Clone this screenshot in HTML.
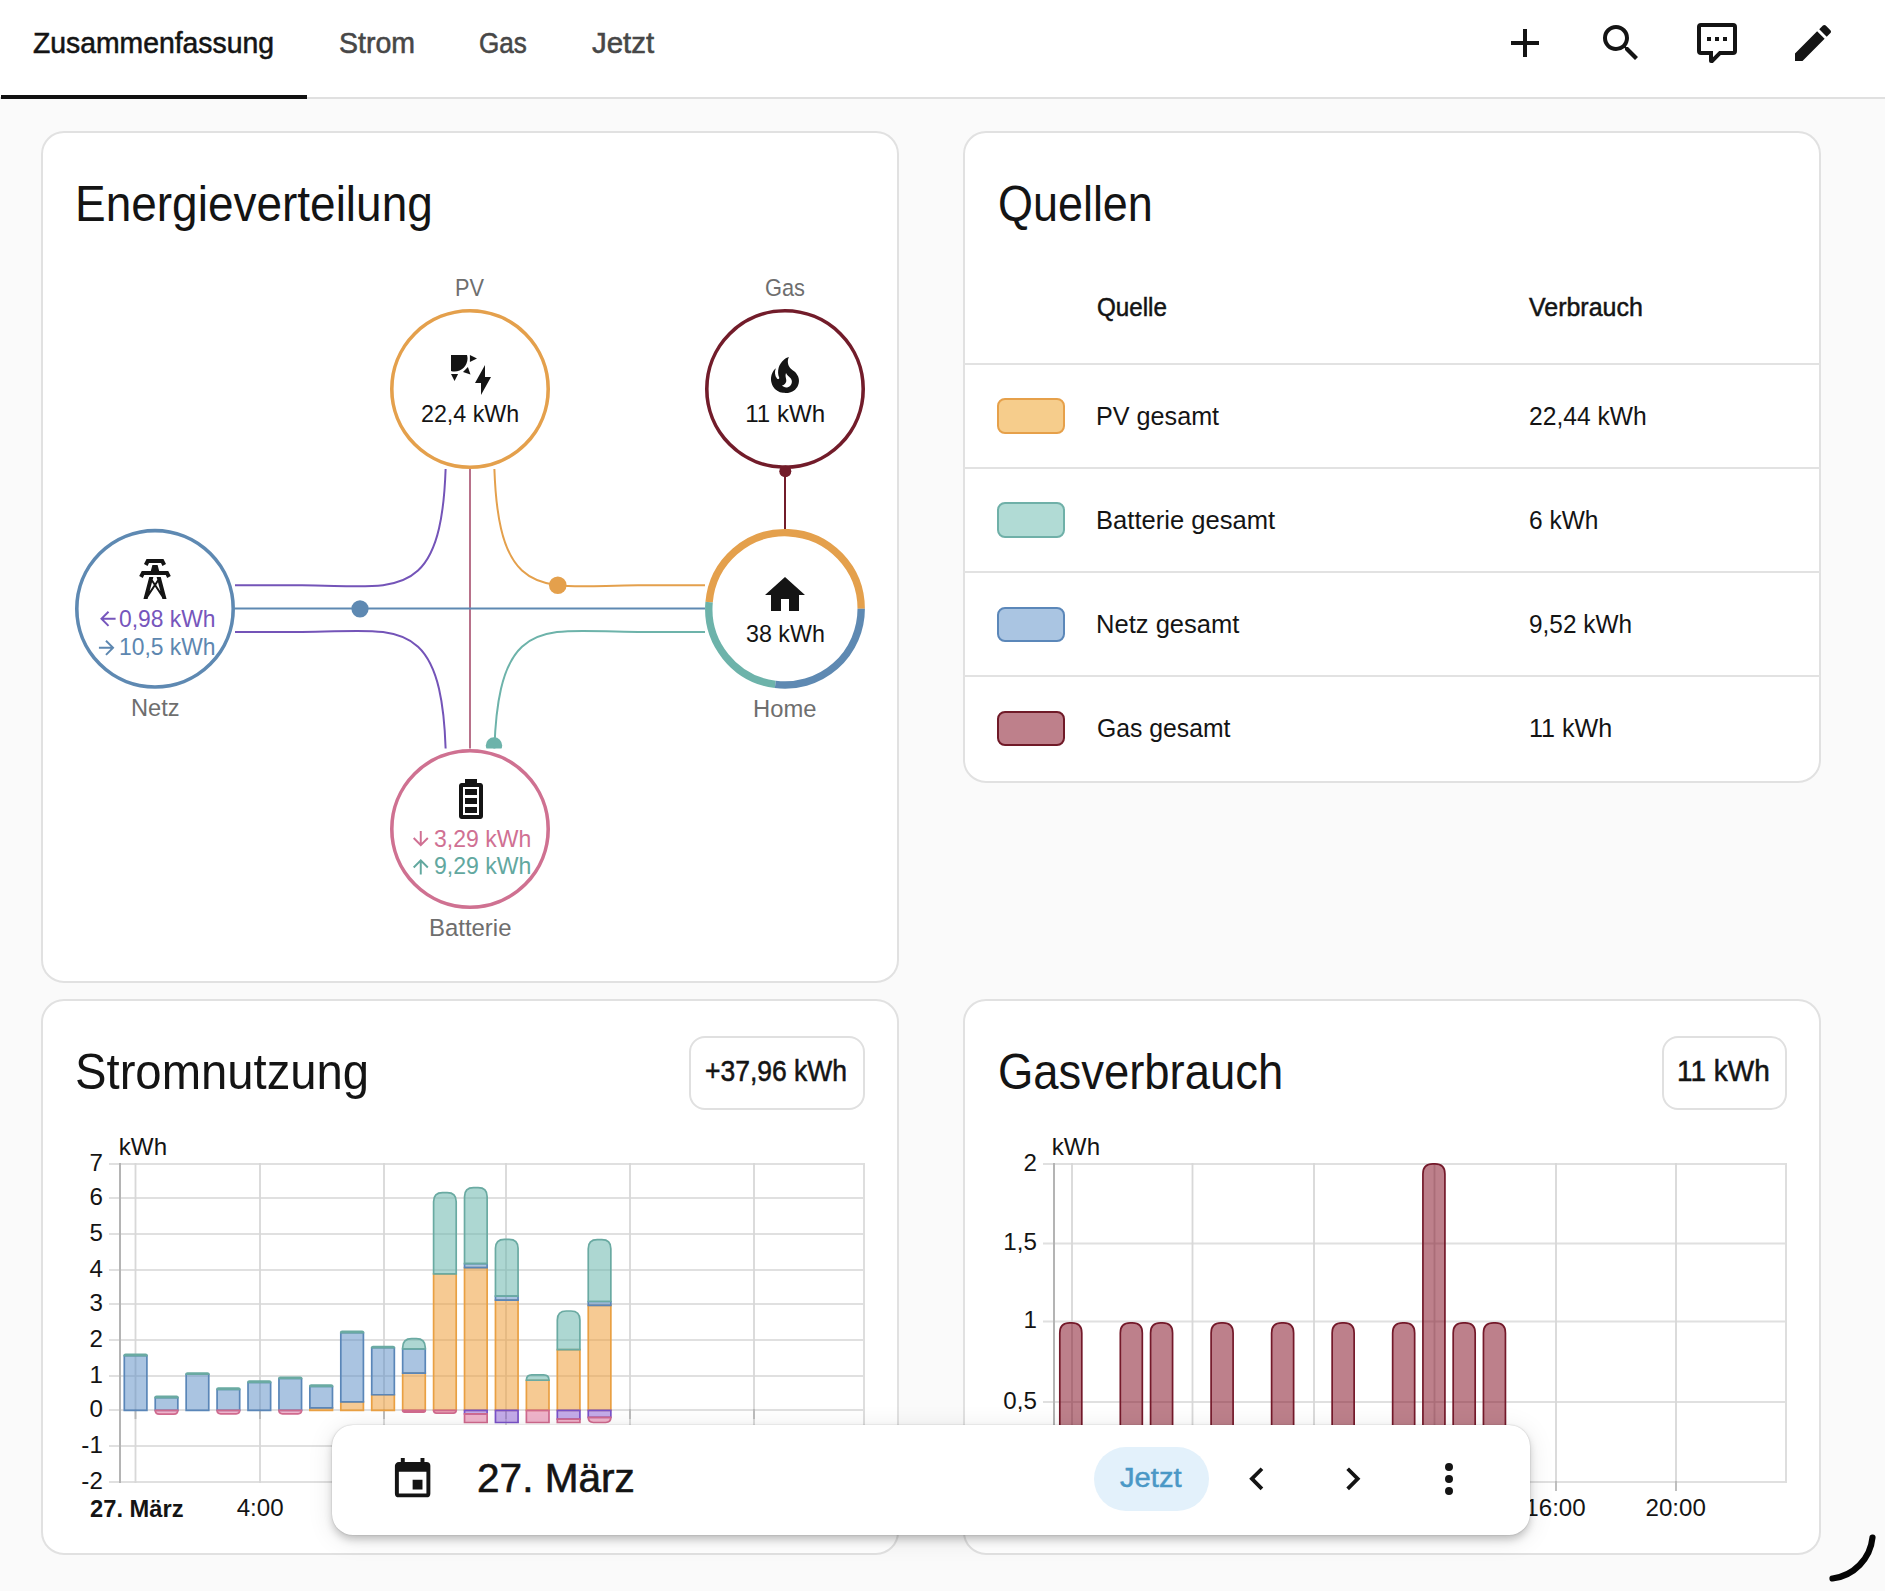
<!DOCTYPE html>
<html><head><meta charset="utf-8"><title>Energie</title>
<style>
html,body{margin:0;padding:0}
body{width:1885px;height:1591px;background:#fafafa;position:relative;overflow:hidden;font-family:"Liberation Sans",sans-serif}
.t{position:absolute;white-space:nowrap;transform-origin:0 0}
svg{overflow:visible}
</style></head><body>
<div style="position:absolute;left:0;top:0;width:1885px;height:97px;background:#fff"></div>
<div style="position:absolute;left:0;top:97px;width:1885px;height:2px;background:#e0e0e0"></div>
<div style="position:absolute;left:1px;top:95px;width:306px;height:4px;background:#111"></div>
<svg style="position:absolute;left:1501.00px;top:19.00px;width:48.00px;height:48.00px" viewBox="0 0 24 24"><path fill="#141414" d="M19 13h-6v6h-2v-6H5v-2h6V5h2v6h6z"/></svg>
<svg style="position:absolute;left:1597.00px;top:19.00px;width:48.00px;height:48.00px" viewBox="0 0 24 24"><path fill="#141414" d="M9.5 3A6.5 6.5 0 0 1 16 9.5c0 1.61-.59 3.09-1.56 4.23l.27.27h.79l5 5-1.5 1.5-5-5v-.79l-.27-.27A6.52 6.52 0 0 1 9.5 16 6.5 6.5 0 0 1 3 9.5 6.5 6.5 0 0 1 9.5 3m0 2C7 5 5 7 5 9.5S7 14 9.5 14 14 12 14 9.5 12 5 9.5 5"/></svg>
<svg style="position:absolute;left:1693.00px;top:19.00px;width:48.00px;height:48.00px" viewBox="0 0 24 24"><path fill="#141414" d="M9 22a1 1 0 0 1-1-1v-3H4a2 2 0 0 1-2-2V4a2 2 0 0 1 2-2h16a2 2 0 0 1 2 2v12a2 2 0 0 1-2 2h-6.1l-3.7 3.71c-.2.19-.45.29-.7.29zm1-6v3.08L13.08 16H20V4H4v12zm7-5h-2V9h2zm-4 0h-2V9h2zm-4 0H7V9h2z"/></svg>
<svg style="position:absolute;left:1789.00px;top:19.00px;width:48.00px;height:48.00px" viewBox="0 0 24 24"><path fill="#141414" d="M20.71 7.04c.39-.39.39-1.04 0-1.41l-2.34-2.34c-.37-.39-1.02-.39-1.41 0l-1.84 1.83 3.75 3.75M3 17.25V21h3.75L17.81 9.93l-3.75-3.75z"/></svg>
<div style="position:absolute;left:41px;top:131px;width:858px;height:852px;box-sizing:border-box;border:2px solid #e1e1e1;border-radius:23px;background:#fff"></div>
<div style="position:absolute;left:963px;top:131px;width:858px;height:652px;box-sizing:border-box;border:2px solid #e1e1e1;border-radius:23px;background:#fff"></div>
<div style="position:absolute;left:41px;top:999px;width:858px;height:556px;box-sizing:border-box;border:2px solid #e1e1e1;border-radius:23px;background:#fff"></div>
<div style="position:absolute;left:963px;top:999px;width:858px;height:556px;box-sizing:border-box;border:2px solid #e1e1e1;border-radius:23px;background:#fff"></div>
<svg style="position:absolute;left:0;top:0" width="1885" height="1591" viewBox="0 0 1885 1591">
<defs><clipPath id="lc"><rect x="235" y="469" width="470" height="279.5"/></clipPath></defs>
<g clip-path="url(#lc)" fill="none" stroke-width="2">
<path stroke="#7454b8" d="M446,445.5 C446,608.6 398,585.3 302,585.3 H200"/>
<path stroke="#e4a04c" d="M494,445.5 C494,608.6 542,585.3 638,585.3 H740"/>
<path stroke="#b8718a" d="M470,440 V780"/>
<path stroke="#5e89b2" d="M200,608.6 H740"/>
<path stroke="#7454b8" d="M446,771.7 C446,608.6 398,632.0 302,632.0 H200"/>
<path stroke="#6db3aa" d="M494,771.7 C494,608.6 542,632.0 638,632.0 H740"/>
<circle cx="360" cy="608.8" r="8.6" fill="#5e89b2" stroke="none"/>
<circle cx="557.8" cy="585.3" r="8.8" fill="#e4a04c" stroke="none"/>
<circle cx="494" cy="745.5" r="8.2" fill="#6db3aa" stroke="none"/>
</g>
<path stroke="#721c2a" stroke-width="2" d="M785,468 V530"/>
<circle cx="785.3" cy="471.3" r="6" fill="#721c2a"/>
<circle cx="470" cy="389" r="78.2" fill="none" stroke="#e4a04c" stroke-width="3.6"/>
<circle cx="785" cy="389" r="78.2" fill="none" stroke="#721c2a" stroke-width="3.6"/>
<circle cx="155" cy="608.8" r="78.2" fill="none" stroke="#5e89b2" stroke-width="3.6"/>
<circle cx="470" cy="829" r="78.2" fill="none" stroke="#cf7191" stroke-width="3.6"/>
<g fill="none" stroke-width="7.4">
<path stroke="#e4a04c" d="M861.20,608.85 A76.2,76.2 0 0 0 709.10,602.08"/>
<path stroke="#6db3aa" d="M709.10,602.08 A76.2,76.2 0 0 0 775.32,684.43"/>
<path stroke="#5e89b2" d="M775.32,684.43 A76.2,76.2 0 0 0 861.20,608.85"/>
</g>
</svg>
<svg style="position:absolute;left:447.00px;top:351.00px;width:48.00px;height:48.00px" viewBox="0 0 24 24"><path fill="#141414" d="M11.45 2v3.55L15 3.77zm-1 6L8 10.46l3.75 1.25zM2 11.45 3.77 15l1.78-3.55zM10 2H2v8c.57.17 1.17.25 1.77.25 3.58.01 6.49-2.9 6.5-6.5-.01-.59-.1-1.18-.27-1.75m7 20v-6h-3l5-9v6h3z"/></svg>
<svg style="position:absolute;left:761.00px;top:351.00px;width:48.00px;height:48.00px" viewBox="0 0 24 24"><path fill="#141414" d="M17.66 11.2c-.23-.3-.51-.56-.77-.82-.67-.6-1.43-1.03-2.07-1.66C13.33 7.26 13 4.85 13.95 3c-.95.23-1.78.75-2.49 1.32-2.59 2.08-3.61 5.75-2.39 8.9.04.1.08.2.08.33 0 .22-.15.42-.35.5-.23.1-.47.04-.66-.12a.6.6 0 0 1-.14-.17c-1.13-1.43-1.31-3.48-.55-5.12C5.78 10 4.87 12.3 5 14.47c.06.5.12 1 .29 1.5.14.6.41 1.2.71 1.73 1.08 1.73 2.95 2.97 4.96 3.22 2.14.27 4.43-.12 6.07-1.6 1.83-1.66 2.47-4.32 1.53-6.6l-.13-.26c-.21-.46-.77-1.26-.77-1.26m-3.16 6.3c-.28.24-.74.5-1.1.6-1.12.4-2.24-.16-2.9-.82 1.19-.28 1.9-1.16 2.11-2.05.17-.8-.15-1.46-.28-2.23-.12-.74-.1-1.37.17-2.06.19.38.39.76.63 1.06.77 1 1.98 1.44 2.24 2.8.04.14.06.28.06.43.03.82-.33 1.72-.93 2.27"/></svg>
<svg style="position:absolute;left:761.00px;top:571.00px;width:48.00px;height:48.00px" viewBox="0 0 24 24"><path fill="#141414" d="M10 20v-6h4v6h5v-8h3L12 3 2 12h3v8z"/></svg>
<svg style="position:absolute;left:131.00px;top:555.00px;width:48.00px;height:48.00px" viewBox="0 0 24 24"><path fill="#141414" d="m8.28 5.45-1.78-.9L7.76 2h8.47l1.27 2.55-1.78.89L15 4H9zM18.62 8h-4.53l-.79-3h-2.6l-.79 3H5.38L4.1 10.55l1.79.89.73-1.44h10.76l.72 1.45 1.79-.89zm-.85 14H15.7l-.24-.9L12 15.9l-3.47 5.2-.23.9H6.23l2.89-11h2.07l-.36 1.35L12 14.1l1.16-1.75-.35-1.35h2.07zm-6.37-7-.9-1.35-1.18 4.48zm3.28 3.12-1.18-4.48-.9 1.36z"/></svg>
<svg style="position:absolute;left:447.00px;top:775.00px;width:48.00px;height:48.00px" viewBox="0 0 24 24"><path fill="#141414" d="M16 20H8V6h8m.67-2H15V2H9v2H7.33C6.6 4 6 4.6 6 5.33v15.34C6 21.4 6.6 22 7.33 22h9.34c.74 0 1.33-.59 1.33-1.33V5.33C18 4.6 17.4 4 16.67 4M15 16H9v3h6zm0-9H9v3h6zm0 4.5H9v3h6z"/></svg>
<svg style="position:absolute;left:95.54px;top:607.24px;width:23.52px;height:23.52px" viewBox="0 0 24 24"><path fill="#7656bc" d="M20 11v2H8l5.5 5.5-1.42 1.42L4.16 12l7.92-7.92L13.5 5.5 8 11z"/></svg>
<svg style="position:absolute;left:94.84px;top:635.54px;width:23.52px;height:23.52px" viewBox="0 0 24 24"><path fill="#5d87b0" d="M4 11v2h12l-5.5 5.5 1.42 1.42L19.84 12l-7.92-7.92L10.5 5.5 16 11z"/></svg>
<svg style="position:absolute;left:409.24px;top:827.24px;width:23.52px;height:23.52px" viewBox="0 0 24 24"><path fill="#d07093" d="M11 4h2v12l5.5-5.5 1.42 1.42L12 19.84l-7.92-7.92L5.5 10.5 11 16z"/></svg>
<svg style="position:absolute;left:409.24px;top:855.24px;width:23.52px;height:23.52px" viewBox="0 0 24 24"><path fill="#62a89f" d="M13 20h-2V8l-5.5 5.5-1.42-1.42L12 4.16l7.92 7.92-1.42 1.42L13 8z"/></svg>
<div style="position:absolute;left:963px;top:363px;width:858px;height:2px;background:#e2e2e2"></div>
<div style="position:absolute;left:963px;top:467px;width:858px;height:2px;background:#e2e2e2"></div>
<div style="position:absolute;left:963px;top:571px;width:858px;height:2px;background:#e2e2e2"></div>
<div style="position:absolute;left:963px;top:675px;width:858px;height:2px;background:#e2e2e2"></div>
<div style="position:absolute;left:997px;top:398.3px;width:68px;height:35.5px;box-sizing:border-box;border:2px solid #e6a04a;border-radius:8px;background:#f6cd8c"></div>
<div style="position:absolute;left:997px;top:502.4px;width:68px;height:35.5px;box-sizing:border-box;border:2px solid #6fb0a8;border-radius:8px;background:#b1dbd5"></div>
<div style="position:absolute;left:997px;top:606.5px;width:68px;height:35.5px;box-sizing:border-box;border:2px solid #5b87b9;border-radius:8px;background:#aac5e2"></div>
<div style="position:absolute;left:997px;top:710.6px;width:68px;height:35.5px;box-sizing:border-box;border:2px solid #701a28;border-radius:8px;background:#be808b"></div>
<svg style="position:absolute;left:0;top:0" width="1885" height="1591" viewBox="0 0 1885 1591">
<rect x="109" y="1163" width="755" height="2" fill="#e0e0e0"/>
<rect x="109" y="1197" width="755" height="2" fill="#e0e0e0"/>
<rect x="109" y="1233" width="755" height="2" fill="#e0e0e0"/>
<rect x="109" y="1269" width="755" height="2" fill="#e0e0e0"/>
<rect x="109" y="1303" width="755" height="2" fill="#e0e0e0"/>
<rect x="109" y="1339" width="755" height="2" fill="#e0e0e0"/>
<rect x="109" y="1375" width="755" height="2" fill="#e0e0e0"/>
<rect x="109" y="1409" width="755" height="2" fill="#e0e0e0"/>
<rect x="109" y="1445" width="755" height="2" fill="#e0e0e0"/>
<rect x="109" y="1481" width="755" height="2" fill="#e0e0e0"/>
<rect x="134.6" y="1163" width="1.8" height="320" fill="#d8d8d8"/>
<rect x="134.6" y="1409" width="1.8" height="10" fill="#b8b8b8"/>
<rect x="259.1" y="1163" width="1.8" height="320" fill="#d8d8d8"/>
<rect x="259.1" y="1409" width="1.8" height="10" fill="#b8b8b8"/>
<rect x="383.1" y="1163" width="1.8" height="320" fill="#d8d8d8"/>
<rect x="383.1" y="1409" width="1.8" height="10" fill="#b8b8b8"/>
<rect x="505.1" y="1163" width="1.8" height="320" fill="#d8d8d8"/>
<rect x="505.1" y="1409" width="1.8" height="10" fill="#b8b8b8"/>
<rect x="629.1" y="1163" width="1.8" height="320" fill="#d8d8d8"/>
<rect x="629.1" y="1409" width="1.8" height="10" fill="#b8b8b8"/>
<rect x="753.1" y="1163" width="1.8" height="320" fill="#d8d8d8"/>
<rect x="753.1" y="1409" width="1.8" height="10" fill="#b8b8b8"/>
<rect x="863" y="1163" width="2" height="320" fill="#dedede"/>
<rect x="119" y="1163" width="2" height="320" fill="#b4b4b4"/>
<path d="M124.30,1410.30 V1355.54 H146.90 V1410.30 H124.30Z" fill="rgba(85,137,196,0.5)" stroke="#5a86b8" stroke-width="1.7"/>
<path d="M124.30,1355.54 V1355.54 Q124.30,1354.30 125.54,1354.30 H145.66 Q146.90,1354.30 146.90,1355.54 V1355.54 H124.30Z" fill="rgba(106,183,173,0.55)" stroke="#6aaaa2" stroke-width="1.7"/>
<path d="M155.23,1410.30 V1397.58 H177.83 V1410.30 H155.23Z" fill="rgba(85,137,196,0.5)" stroke="#5a86b8" stroke-width="1.7"/>
<path d="M155.23,1397.58 V1397.58 Q155.23,1396.34 156.47,1396.34 H176.59 Q177.83,1396.34 177.83,1397.58 V1397.58 H155.23Z" fill="rgba(106,183,173,0.55)" stroke="#6aaaa2" stroke-width="1.7"/>
<path d="M155.23,1410.30 V1410.30 H177.83 V1410.30 Q177.83,1414.19 173.94,1414.19 H159.12 Q155.23,1414.19 155.23,1410.30Z" fill="rgba(224,106,152,0.5)" stroke="#d06a8e" stroke-width="1.7"/>
<path d="M186.16,1410.30 V1374.26 H208.76 V1410.30 H186.16Z" fill="rgba(85,137,196,0.5)" stroke="#5a86b8" stroke-width="1.7"/>
<path d="M186.16,1374.26 V1374.26 Q186.16,1373.03 187.40,1373.03 H207.52 Q208.76,1373.03 208.76,1374.26 V1374.26 H186.16Z" fill="rgba(106,183,173,0.55)" stroke="#6aaaa2" stroke-width="1.7"/>
<path d="M217.09,1410.30 V1389.46 H239.69 V1410.30 H217.09Z" fill="rgba(85,137,196,0.5)" stroke="#5a86b8" stroke-width="1.7"/>
<path d="M217.09,1389.46 V1389.46 Q217.09,1388.22 218.33,1388.22 H238.45 Q239.69,1388.22 239.69,1389.46 V1389.46 H217.09Z" fill="rgba(106,183,173,0.55)" stroke="#6aaaa2" stroke-width="1.7"/>
<path d="M217.09,1410.30 V1410.30 H239.69 V1410.30 Q239.69,1413.83 236.16,1413.83 H220.62 Q217.09,1413.83 217.09,1410.30Z" fill="rgba(224,106,152,0.5)" stroke="#d06a8e" stroke-width="1.7"/>
<path d="M248.02,1410.30 V1382.39 H270.62 V1410.30 H248.02Z" fill="rgba(85,137,196,0.5)" stroke="#5a86b8" stroke-width="1.7"/>
<path d="M248.02,1382.39 V1382.39 Q248.02,1381.15 249.26,1381.15 H269.38 Q270.62,1381.15 270.62,1382.39 V1382.39 H248.02Z" fill="rgba(106,183,173,0.55)" stroke="#6aaaa2" stroke-width="1.7"/>
<path d="M278.95,1410.30 V1378.50 H301.55 V1410.30 H278.95Z" fill="rgba(85,137,196,0.5)" stroke="#5a86b8" stroke-width="1.7"/>
<path d="M278.95,1378.50 V1378.50 Q278.95,1377.27 280.19,1377.27 H300.31 Q301.55,1377.27 301.55,1378.50 V1378.50 H278.95Z" fill="rgba(106,183,173,0.55)" stroke="#6aaaa2" stroke-width="1.7"/>
<path d="M278.95,1410.30 V1410.30 H301.55 V1410.30 Q301.55,1413.83 298.02,1413.83 H282.48 Q278.95,1413.83 278.95,1410.30Z" fill="rgba(224,106,152,0.5)" stroke="#d06a8e" stroke-width="1.7"/>
<path d="M309.88,1410.30 V1407.83 H332.48 V1410.30 H309.88Z" fill="rgba(239,159,58,0.55)" stroke="#e9a043" stroke-width="1.7"/>
<path d="M309.88,1407.83 V1386.28 H332.48 V1407.83 H309.88Z" fill="rgba(85,137,196,0.5)" stroke="#5a86b8" stroke-width="1.7"/>
<path d="M309.88,1386.28 V1386.28 Q309.88,1385.04 311.12,1385.04 H331.24 Q332.48,1385.04 332.48,1386.28 V1386.28 H309.88Z" fill="rgba(106,183,173,0.55)" stroke="#6aaaa2" stroke-width="1.7"/>
<path d="M340.81,1410.30 V1401.82 H363.41 V1410.30 H340.81Z" fill="rgba(239,159,58,0.55)" stroke="#e9a043" stroke-width="1.7"/>
<path d="M340.81,1401.82 V1332.57 H363.41 V1401.82 H340.81Z" fill="rgba(85,137,196,0.5)" stroke="#5a86b8" stroke-width="1.7"/>
<path d="M340.81,1332.57 V1332.57 Q340.81,1331.34 342.05,1331.34 H362.17 Q363.41,1331.34 363.41,1332.57 V1332.57 H340.81Z" fill="rgba(106,183,173,0.55)" stroke="#6aaaa2" stroke-width="1.7"/>
<path d="M371.74,1410.30 V1394.75 H394.34 V1410.30 H371.74Z" fill="rgba(239,159,58,0.55)" stroke="#e9a043" stroke-width="1.7"/>
<path d="M371.74,1394.75 V1347.77 H394.34 V1394.75 H371.74Z" fill="rgba(85,137,196,0.5)" stroke="#5a86b8" stroke-width="1.7"/>
<path d="M371.74,1347.77 V1347.77 Q371.74,1346.53 372.98,1346.53 H393.10 Q394.34,1346.53 394.34,1347.77 V1347.77 H371.74Z" fill="rgba(106,183,173,0.55)" stroke="#6aaaa2" stroke-width="1.7"/>
<path d="M402.67,1410.30 V1373.20 H425.27 V1410.30 H402.67Z" fill="rgba(239,159,58,0.55)" stroke="#e9a043" stroke-width="1.7"/>
<path d="M402.67,1373.20 V1348.83 H425.27 V1373.20 H402.67Z" fill="rgba(85,137,196,0.5)" stroke="#5a86b8" stroke-width="1.7"/>
<path d="M402.67,1348.83 V1347.58 Q402.67,1338.58 411.67,1338.58 H416.27 Q425.27,1338.58 425.27,1347.58 V1348.83 H402.67Z" fill="rgba(106,183,173,0.55)" stroke="#6aaaa2" stroke-width="1.7"/>
<path d="M402.67,1410.30 V1410.30 H425.27 V1410.30 Q425.27,1412.07 423.50,1412.07 H404.44 Q402.67,1412.07 402.67,1410.30Z" fill="rgba(224,106,152,0.5)" stroke="#d06a8e" stroke-width="1.7"/>
<path d="M433.60,1410.30 V1273.93 H456.20 V1410.30 H433.60Z" fill="rgba(239,159,58,0.55)" stroke="#e9a043" stroke-width="1.7"/>
<path d="M433.60,1273.93 V1201.67 Q433.60,1192.67 442.60,1192.67 H447.20 Q456.20,1192.67 456.20,1201.67 V1273.93 H433.60Z" fill="rgba(106,183,173,0.55)" stroke="#6aaaa2" stroke-width="1.7"/>
<path d="M433.60,1410.30 V1410.30 H456.20 V1410.30 Q456.20,1413.13 453.37,1413.13 H436.43 Q433.60,1413.13 433.60,1410.30Z" fill="rgba(224,106,152,0.5)" stroke="#d06a8e" stroke-width="1.7"/>
<path d="M464.53,1410.30 V1267.57 H487.13 V1410.30 H464.53Z" fill="rgba(239,159,58,0.55)" stroke="#e9a043" stroke-width="1.7"/>
<path d="M464.53,1267.57 V1263.68 H487.13 V1267.57 H464.53Z" fill="rgba(85,137,196,0.5)" stroke="#5a86b8" stroke-width="1.7"/>
<path d="M464.53,1263.68 V1196.72 Q464.53,1187.72 473.53,1187.72 H478.13 Q487.13,1187.72 487.13,1196.72 V1263.68 H464.53Z" fill="rgba(106,183,173,0.55)" stroke="#6aaaa2" stroke-width="1.7"/>
<path d="M464.53,1413.83 V1410.30 H487.13 V1413.83 H464.53Z" fill="rgba(138,90,212,0.5)" stroke="#7a52c8" stroke-width="1.7"/>
<path d="M464.53,1422.49 V1413.83 H487.13 V1422.49 H464.53Z" fill="rgba(224,106,152,0.5)" stroke="#d06a8e" stroke-width="1.7"/>
<path d="M495.46,1410.30 V1300.07 H518.06 V1410.30 H495.46Z" fill="rgba(239,159,58,0.55)" stroke="#e9a043" stroke-width="1.7"/>
<path d="M495.46,1300.07 V1296.18 H518.06 V1300.07 H495.46Z" fill="rgba(85,137,196,0.5)" stroke="#5a86b8" stroke-width="1.7"/>
<path d="M495.46,1296.18 V1248.30 Q495.46,1239.30 504.46,1239.30 H509.06 Q518.06,1239.30 518.06,1248.30 V1296.18 H495.46Z" fill="rgba(106,183,173,0.55)" stroke="#6aaaa2" stroke-width="1.7"/>
<path d="M495.46,1422.49 V1410.30 H518.06 V1422.49 H495.46Z" fill="rgba(138,90,212,0.5)" stroke="#7a52c8" stroke-width="1.7"/>
<path d="M526.39,1410.30 V1380.27 H548.99 V1410.30 H526.39Z" fill="rgba(239,159,58,0.55)" stroke="#e9a043" stroke-width="1.7"/>
<path d="M526.39,1380.27 V1380.27 Q526.39,1374.97 531.69,1374.97 H543.69 Q548.99,1374.97 548.99,1380.27 V1380.27 H526.39Z" fill="rgba(106,183,173,0.55)" stroke="#6aaaa2" stroke-width="1.7"/>
<path d="M526.39,1422.49 V1410.30 H548.99 V1422.49 H526.39Z" fill="rgba(224,106,152,0.5)" stroke="#d06a8e" stroke-width="1.7"/>
<path d="M557.32,1410.30 V1349.53 H579.92 V1410.30 H557.32Z" fill="rgba(239,159,58,0.55)" stroke="#e9a043" stroke-width="1.7"/>
<path d="M557.32,1349.53 V1320.02 Q557.32,1311.02 566.32,1311.02 H570.92 Q579.92,1311.02 579.92,1320.02 V1349.53 H557.32Z" fill="rgba(106,183,173,0.55)" stroke="#6aaaa2" stroke-width="1.7"/>
<path d="M557.32,1419.13 V1410.30 H579.92 V1419.13 H557.32Z" fill="rgba(138,90,212,0.5)" stroke="#7a52c8" stroke-width="1.7"/>
<path d="M557.32,1422.49 V1419.13 H579.92 V1422.49 H557.32Z" fill="rgba(224,106,152,0.5)" stroke="#d06a8e" stroke-width="1.7"/>
<path d="M588.25,1410.30 V1305.37 H610.85 V1410.30 H588.25Z" fill="rgba(239,159,58,0.55)" stroke="#e9a043" stroke-width="1.7"/>
<path d="M588.25,1305.37 V1301.48 H610.85 V1305.37 H588.25Z" fill="rgba(85,137,196,0.5)" stroke="#5a86b8" stroke-width="1.7"/>
<path d="M588.25,1301.48 V1248.66 Q588.25,1239.66 597.25,1239.66 H601.85 Q610.85,1239.66 610.85,1248.66 V1301.48 H588.25Z" fill="rgba(106,183,173,0.55)" stroke="#6aaaa2" stroke-width="1.7"/>
<path d="M588.25,1417.37 V1410.30 H610.85 V1417.37 H588.25Z" fill="rgba(138,90,212,0.5)" stroke="#7a52c8" stroke-width="1.7"/>
<path d="M588.25,1417.37 V1417.37 H610.85 V1417.37 Q610.85,1422.49 605.73,1422.49 H593.37 Q588.25,1422.49 588.25,1417.37Z" fill="rgba(224,106,152,0.5)" stroke="#d06a8e" stroke-width="1.7"/>
<rect x="1043" y="1163" width="744" height="2" fill="#e0e0e0"/>
<rect x="1043" y="1242.5" width="744" height="2" fill="#e0e0e0"/>
<rect x="1043" y="1320.5" width="744" height="2" fill="#e0e0e0"/>
<rect x="1043" y="1401" width="744" height="2" fill="#e0e0e0"/>
<rect x="1043" y="1481" width="744" height="2" fill="#e0e0e0"/>
<rect x="1071.1" y="1163" width="1.8" height="320" fill="#d8d8d8"/>
<rect x="1071.1" y="1481" width="1.8" height="10" fill="#b8b8b8"/>
<rect x="1191.6" y="1163" width="1.8" height="320" fill="#d8d8d8"/>
<rect x="1191.6" y="1481" width="1.8" height="10" fill="#b8b8b8"/>
<rect x="1313.1" y="1163" width="1.8" height="320" fill="#d8d8d8"/>
<rect x="1313.1" y="1481" width="1.8" height="10" fill="#b8b8b8"/>
<rect x="1433.6" y="1163" width="1.8" height="320" fill="#d8d8d8"/>
<rect x="1433.6" y="1481" width="1.8" height="10" fill="#b8b8b8"/>
<rect x="1555.1" y="1163" width="1.8" height="320" fill="#d8d8d8"/>
<rect x="1555.1" y="1481" width="1.8" height="10" fill="#b8b8b8"/>
<rect x="1675.1" y="1163" width="1.8" height="320" fill="#d8d8d8"/>
<rect x="1675.1" y="1481" width="1.8" height="10" fill="#b8b8b8"/>
<rect x="1785" y="1163" width="2" height="320" fill="#dedede"/>
<rect x="1053" y="1163" width="2" height="320" fill="#b4b4b4"/>
<path d="M1059.80,1481.90 V1332.90 Q1059.80,1322.90 1069.80,1322.90 H1071.80 Q1081.80,1322.90 1081.80,1332.90 V1481.90 H1059.80Z" fill="rgba(123,1,23,0.5)" stroke="#74192a" stroke-width="1.7"/>
<path d="M1120.32,1481.90 V1332.90 Q1120.32,1322.90 1130.32,1322.90 H1132.32 Q1142.32,1322.90 1142.32,1332.90 V1481.90 H1120.32Z" fill="rgba(123,1,23,0.5)" stroke="#74192a" stroke-width="1.7"/>
<path d="M1150.58,1481.90 V1332.90 Q1150.58,1322.90 1160.58,1322.90 H1162.58 Q1172.58,1322.90 1172.58,1332.90 V1481.90 H1150.58Z" fill="rgba(123,1,23,0.5)" stroke="#74192a" stroke-width="1.7"/>
<path d="M1211.10,1481.90 V1332.90 Q1211.10,1322.90 1221.10,1322.90 H1223.10 Q1233.10,1322.90 1233.10,1332.90 V1481.90 H1211.10Z" fill="rgba(123,1,23,0.5)" stroke="#74192a" stroke-width="1.7"/>
<path d="M1271.62,1481.90 V1332.90 Q1271.62,1322.90 1281.62,1322.90 H1283.62 Q1293.62,1322.90 1293.62,1332.90 V1481.90 H1271.62Z" fill="rgba(123,1,23,0.5)" stroke="#74192a" stroke-width="1.7"/>
<path d="M1332.14,1481.90 V1332.90 Q1332.14,1322.90 1342.14,1322.90 H1344.14 Q1354.14,1322.90 1354.14,1332.90 V1481.90 H1332.14Z" fill="rgba(123,1,23,0.5)" stroke="#74192a" stroke-width="1.7"/>
<path d="M1392.66,1481.90 V1332.90 Q1392.66,1322.90 1402.66,1322.90 H1404.66 Q1414.66,1322.90 1414.66,1332.90 V1481.90 H1392.66Z" fill="rgba(123,1,23,0.5)" stroke="#74192a" stroke-width="1.7"/>
<path d="M1422.92,1481.90 V1173.90 Q1422.92,1163.90 1432.92,1163.90 H1434.92 Q1444.92,1163.90 1444.92,1173.90 V1481.90 H1422.92Z" fill="rgba(123,1,23,0.5)" stroke="#74192a" stroke-width="1.7"/>
<path d="M1453.18,1481.90 V1332.90 Q1453.18,1322.90 1463.18,1322.90 H1465.18 Q1475.18,1322.90 1475.18,1332.90 V1481.90 H1453.18Z" fill="rgba(123,1,23,0.5)" stroke="#74192a" stroke-width="1.7"/>
<path d="M1483.44,1481.90 V1332.90 Q1483.44,1322.90 1493.44,1322.90 H1495.44 Q1505.44,1322.90 1505.44,1332.90 V1481.90 H1483.44Z" fill="rgba(123,1,23,0.5)" stroke="#74192a" stroke-width="1.7"/>
</svg>
<div style="position:absolute;left:688.5px;top:1035.5px;width:176px;height:74.5px;box-sizing:border-box;border:2px solid #e0e0e0;border-radius:16px;background:#fff"></div>
<div style="position:absolute;left:1661.5px;top:1035.5px;width:125.5px;height:74.5px;box-sizing:border-box;border:2px solid #e0e0e0;border-radius:16px;background:#fff"></div>
<span class="t" style="left:33.40px;top:28.51px;font-size:28.92px;line-height:28.92px;color:#141414;font-weight:400;transform:scaleX(0.9802);-webkit-text-stroke:0.55px #141414">Zusammenfassung</span>
<span class="t" style="left:338.91px;top:28.51px;font-size:28.92px;line-height:28.92px;color:#474747;font-weight:400;transform:scaleX(0.9865);-webkit-text-stroke:0.55px #474747">Strom</span>
<span class="t" style="left:478.80px;top:28.51px;font-size:28.92px;line-height:28.92px;color:#474747;font-weight:400;transform:scaleX(0.9019);-webkit-text-stroke:0.55px #474747">Gas</span>
<span class="t" style="left:591.90px;top:28.51px;font-size:28.92px;line-height:28.92px;color:#474747;font-weight:400;transform:scaleX(1.0194);-webkit-text-stroke:0.55px #474747">Jetzt</span>
<span class="t" style="left:75.27px;top:179.08px;font-size:49.27px;line-height:49.27px;color:#141414;font-weight:400;transform:scaleX(0.9331)">Energieverteilung</span>
<span class="t" style="left:997.58px;top:179.18px;font-size:49.27px;line-height:49.27px;color:#141414;font-weight:400;transform:scaleX(0.9117)">Quellen</span>
<span class="t" style="left:74.98px;top:1047.08px;font-size:49.27px;line-height:49.27px;color:#141414;font-weight:400;transform:scaleX(0.9590)">Stromnutzung</span>
<span class="t" style="left:998.16px;top:1047.08px;font-size:49.27px;line-height:49.27px;color:#141414;font-weight:400;transform:scaleX(0.9216)">Gasverbrauch</span>
<span class="t" style="left:455.20px;top:276.37px;font-size:24.13px;line-height:24.13px;color:#6e6e6e;font-weight:400;transform:scaleX(0.9009)">PV</span>
<span class="t" style="left:764.50px;top:276.17px;font-size:24.13px;line-height:24.13px;color:#6e6e6e;font-weight:400;transform:scaleX(0.9036)">Gas</span>
<span class="t" style="left:131.12px;top:696.37px;font-size:24.13px;line-height:24.13px;color:#6e6e6e;font-weight:400;transform:scaleX(0.9807)">Netz</span>
<span class="t" style="left:753.11px;top:696.57px;font-size:24.13px;line-height:24.13px;color:#6e6e6e;font-weight:400;transform:scaleX(0.9856)">Home</span>
<span class="t" style="left:428.71px;top:916.37px;font-size:24.13px;line-height:24.13px;color:#6e6e6e;font-weight:400;transform:scaleX(0.9917)">Batterie</span>
<span class="t" style="left:421.04px;top:402.37px;font-size:24.13px;line-height:24.13px;color:#141414;font-weight:400;transform:scaleX(0.9635)">22,4 kWh</span>
<span class="t" style="left:745.23px;top:402.37px;font-size:24.13px;line-height:24.13px;color:#141414;font-weight:400;transform:scaleX(1.0000)">11 kWh</span>
<span class="t" style="left:745.90px;top:622.07px;font-size:24.13px;line-height:24.13px;color:#141414;font-weight:400;transform:scaleX(0.9648)">38 kWh</span>
<span class="t" style="left:119.20px;top:607.17px;font-size:24.13px;line-height:24.13px;color:#7656bc;font-weight:400;transform:scaleX(0.9469)">0,98 kWh</span>
<span class="t" style="left:119.15px;top:635.07px;font-size:24.13px;line-height:24.13px;color:#5d87b0;font-weight:400;transform:scaleX(0.9474)">10,5 kWh</span>
<span class="t" style="left:433.90px;top:826.77px;font-size:24.13px;line-height:24.13px;color:#d07093;font-weight:400;transform:scaleX(0.9539)">3,29 kWh</span>
<span class="t" style="left:433.74px;top:854.47px;font-size:24.13px;line-height:24.13px;color:#62a89f;font-weight:400;transform:scaleX(0.9554)">9,29 kWh</span>
<span class="t" style="left:1096.95px;top:295.36px;font-size:25.44px;line-height:25.44px;color:#141414;font-weight:400;transform:scaleX(0.9510);-webkit-text-stroke:0.5px #141414">Quelle</span>
<span class="t" style="left:1529.40px;top:295.36px;font-size:25.44px;line-height:25.44px;color:#141414;font-weight:400;transform:scaleX(0.9813);-webkit-text-stroke:0.5px #141414">Verbrauch</span>
<span class="t" style="left:1095.78px;top:404.16px;font-size:24.86px;line-height:24.86px;color:#141414;font-weight:400;transform:scaleX(1.0124)">PV gesamt</span>
<span class="t" style="left:1528.61px;top:404.16px;font-size:24.86px;line-height:24.86px;color:#141414;font-weight:400;transform:scaleX(0.9902)">22,44 kWh</span>
<span class="t" style="left:1095.74px;top:508.26px;font-size:24.86px;line-height:24.86px;color:#141414;font-weight:400;transform:scaleX(1.0285)">Batterie gesamt</span>
<span class="t" style="left:1528.61px;top:508.26px;font-size:24.86px;line-height:24.86px;color:#141414;font-weight:400;transform:scaleX(0.9856)">6 kWh</span>
<span class="t" style="left:1095.74px;top:612.36px;font-size:24.86px;line-height:24.86px;color:#141414;font-weight:400;transform:scaleX(1.0280)">Netz gesamt</span>
<span class="t" style="left:1528.62px;top:612.36px;font-size:24.86px;line-height:24.86px;color:#141414;font-weight:400;transform:scaleX(0.9804)">9,52 kWh</span>
<span class="t" style="left:1096.80px;top:716.46px;font-size:24.86px;line-height:24.86px;color:#141414;font-weight:400;transform:scaleX(0.9952)">Gas gesamt</span>
<span class="t" style="left:1528.59px;top:716.46px;font-size:24.86px;line-height:24.86px;color:#141414;font-weight:400;transform:scaleX(1.0092)">11 kWh</span>
<span class="t" style="left:118.80px;top:1134.77px;font-size:24.13px;line-height:24.13px;color:#141414;font-weight:400;transform:scaleX(1.0000)">kWh</span>
<span class="t" style="left:89.40px;top:1150.77px;font-size:24.13px;line-height:24.13px;color:#141414;font-weight:400;transform:scaleX(1.0000)">7</span>
<span class="t" style="left:89.40px;top:1184.77px;font-size:24.13px;line-height:24.13px;color:#141414;font-weight:400;transform:scaleX(1.0000)">6</span>
<span class="t" style="left:89.40px;top:1220.77px;font-size:24.13px;line-height:24.13px;color:#141414;font-weight:400;transform:scaleX(1.0000)">5</span>
<span class="t" style="left:89.40px;top:1256.77px;font-size:24.13px;line-height:24.13px;color:#141414;font-weight:400;transform:scaleX(1.0000)">4</span>
<span class="t" style="left:89.40px;top:1290.77px;font-size:24.13px;line-height:24.13px;color:#141414;font-weight:400;transform:scaleX(1.0000)">3</span>
<span class="t" style="left:89.40px;top:1326.77px;font-size:24.13px;line-height:24.13px;color:#141414;font-weight:400;transform:scaleX(1.0000)">2</span>
<span class="t" style="left:89.40px;top:1362.77px;font-size:24.13px;line-height:24.13px;color:#141414;font-weight:400;transform:scaleX(1.0000)">1</span>
<span class="t" style="left:89.40px;top:1396.77px;font-size:24.13px;line-height:24.13px;color:#141414;font-weight:400;transform:scaleX(1.0000)">0</span>
<span class="t" style="left:81.37px;top:1432.77px;font-size:24.13px;line-height:24.13px;color:#141414;font-weight:400;transform:scaleX(1.0000)">-1</span>
<span class="t" style="left:81.37px;top:1468.77px;font-size:24.13px;line-height:24.13px;color:#141414;font-weight:400;transform:scaleX(1.0000)">-2</span>
<span class="t" style="left:89.70px;top:1496.62px;font-size:23.84px;line-height:23.84px;color:#141414;font-weight:700;transform:scaleX(0.9956)">27. März</span>
<span class="t" style="left:236.64px;top:1496.37px;font-size:24.13px;line-height:24.13px;color:#141414;font-weight:400;transform:scaleX(1.0000)">4:00</span>
<span class="t" style="left:1051.80px;top:1134.77px;font-size:24.13px;line-height:24.13px;color:#141414;font-weight:400;transform:scaleX(1.0000)">kWh</span>
<span class="t" style="left:1023.40px;top:1150.57px;font-size:24.13px;line-height:24.13px;color:#141414;font-weight:400;transform:scaleX(1.0000)">2</span>
<span class="t" style="left:1003.29px;top:1230.07px;font-size:24.13px;line-height:24.13px;color:#141414;font-weight:400;transform:scaleX(1.0000)">1,5</span>
<span class="t" style="left:1023.40px;top:1308.07px;font-size:24.13px;line-height:24.13px;color:#141414;font-weight:400;transform:scaleX(1.0000)">1</span>
<span class="t" style="left:1003.29px;top:1388.57px;font-size:24.13px;line-height:24.13px;color:#141414;font-weight:400;transform:scaleX(1.0000)">0,5</span>
<span class="t" style="left:1525.34px;top:1496.17px;font-size:24.13px;line-height:24.13px;color:#141414;font-weight:400;transform:scaleX(1.0000)">16:00</span>
<span class="t" style="left:1645.54px;top:1496.17px;font-size:24.13px;line-height:24.13px;color:#141414;font-weight:400;transform:scaleX(1.0000)">20:00</span>
<span class="t" style="left:705.10px;top:1055.84px;font-size:29.36px;line-height:29.36px;color:#141414;font-weight:400;transform:scaleX(0.9023);-webkit-text-stroke:0.55px #141414">+37,96 kWh</span>
<span class="t" style="left:1677.10px;top:1055.84px;font-size:29.36px;line-height:29.36px;color:#141414;font-weight:400;transform:scaleX(0.9519);-webkit-text-stroke:0.55px #141414">11 kWh</span>
<div style="position:absolute;left:332px;top:1425px;width:1197.5px;height:109.5px;border-radius:21px;background:#fff;box-shadow:0 5px 9px -1px rgba(0,0,0,0.22),0 4px 26px rgba(0,0,0,0.10),0 0 1.5px rgba(0,0,0,0.25)"></div>
<svg style="position:absolute;left:389.36px;top:1455.66px;width:47.28px;height:47.28px" viewBox="0 0 24 24"><path fill="#141414" d="M19 19H5V8h14m-3-7v2H8V1H6v2H5c-1.11 0-2 .89-2 2v14a2 2 0 0 0 2 2h14a2 2 0 0 0 2-2V5a2 2 0 0 0-2-2h-1V1m-1 11h-5v5h5z"/></svg>
<div style="position:absolute;left:1094.2px;top:1447px;width:114.6px;height:63.5px;border-radius:32px;background:#e3f1fb"></div>
<svg style="position:absolute;left:1233.80px;top:1456.40px;width:45.60px;height:45.60px" viewBox="0 0 24 24"><path fill="#141414" d="M15.41 16.58 10.83 12l4.58-4.59L14 6l-6 6 6 6z"/></svg>
<svg style="position:absolute;left:1329.70px;top:1456.40px;width:45.60px;height:45.60px" viewBox="0 0 24 24"><path fill="#141414" d="M8.59 16.58 13.17 12 8.59 7.41 10 6l6 6-6 6z"/></svg>
<svg style="position:absolute;left:1424.90px;top:1455.40px;width:48.00px;height:48.00px" viewBox="0 0 24 24"><path fill="#141414" d="M12 16a2 2 0 0 1 2 2 2 2 0 0 1-2 2 2 2 0 0 1-2-2 2 2 0 0 1 2-2m0-6a2 2 0 0 1 2 2 2 2 0 0 1-2 2 2 2 0 0 1-2-2 2 2 0 0 1 2-2m0-6a2 2 0 0 1 2 2 2 2 0 0 1-2 2 2 2 0 0 1-2-2 2 2 0 0 1 2-2"/></svg>
<svg style="position:absolute;left:0;top:0" width="1885" height="1591" viewBox="0 0 1885 1591"><path d="M1832.5,1578.5 A46,46 0 0 0 1872.5,1537.5" fill="none" stroke="#050505" stroke-width="6.2" stroke-linecap="round"/></svg>
<span class="t" style="left:476.73px;top:1458.47px;font-size:41.13px;line-height:41.13px;color:#141414;font-weight:400;transform:scaleX(0.9865);-webkit-text-stroke:0.6px #141414">27. März</span>
<span class="t" style="left:1120.30px;top:1463.30px;font-size:28.34px;line-height:28.34px;color:#4a98c6;font-weight:400;transform:scaleX(1.0291);-webkit-text-stroke:0.5px #4a98c6">Jetzt</span>
</body></html>
